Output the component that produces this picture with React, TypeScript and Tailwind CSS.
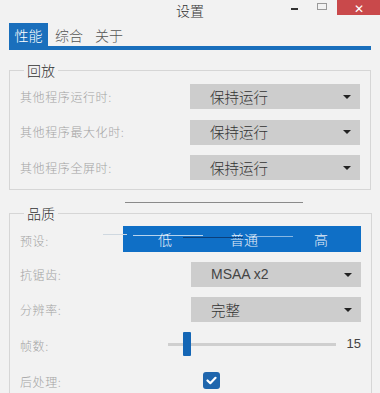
import React from "react";

const font = { fontFamily: '"Noto Sans CJK SC", "Noto Sans", sans-serif' };

function Dropdown({ value, latin }: { value: string; latin?: boolean }) {
  return (
    <div className="flex h-[25px] w-[170px] items-center justify-between bg-[#cdcdcd] pl-[20px] pr-[9px]">
      <span
        className={latin ? "text-[14px] text-[#444]" : "text-[14.5px] font-light text-[#333]"}
        style={latin ? { fontFamily: '"Liberation Sans", Arial, sans-serif' } : undefined}
      >
        {value}
      </span>
      <span className="h-0 w-0 border-x-[4px] border-t-[4px] border-x-transparent border-t-[#222]" />
    </div>
  );
}

function Label({ children }: { children: React.ReactNode }) {
  return <span className="text-[12px] font-light tracking-[0.6px] text-[#a3a3a3]">{children}</span>;
}

export default function App() {
  return (
    <div className="h-[393px] w-[380px] overflow-hidden bg-[#f2f2f2]" style={font}>
      {/* title bar */}
      <div className="grid h-[23px] grid-cols-[1fr_auto_1fr] items-start">
        <div />
        <div className="pt-[1px] text-[14px] font-light leading-[18px] text-[#333]">设置</div>
        <div className="flex items-start justify-end">
          <div className="mr-[19px] mt-[8px] h-[2px] w-[7px] bg-[#333]" />
          <div className="mr-[10px] mt-[3px] h-[7px] w-[10px] border-[1.5px] border-[#999]" />
          <div className="flex h-[15px] w-[43px] items-center justify-center bg-[#c9494b] text-[12px] leading-none text-white">
            ✕
          </div>
        </div>
      </div>

      {/* tabs */}
      <div className="flex items-stretch px-[9px]">
        <div className="flex h-[23px] w-[39px] items-center justify-center bg-[#1a6fbc] pt-[1px] text-[14px] font-light text-white">性能</div>
        <div className="flex h-[23px] items-center pl-[7px] pt-[1px] text-[14px] font-light text-[#555]">综合</div>
        <div className="flex h-[23px] items-center pl-[12px] pt-[1px] text-[14px] font-light text-[#555]">关于</div>
      </div>
      <div className="mx-[9px] h-[4px] bg-[#1a6fbc]" />

      {/* group 回放 */}
      <fieldset className="mx-[9px] mt-[10px] border border-[#d6d6d6] px-[10px] pb-[9px]">
        <legend className="ml-[4px] px-[3px] text-[14px] font-light leading-[20px] text-[#333]">回放</legend>
        <div className="mt-[4px] flex flex-col gap-[10.5px]">
          {["其他程序运行时:", "其他程序最大化时:", "其他程序全屏时:"].map((l) => (
            <div key={l} className="flex items-center justify-between">
              <Label>{l}</Label>
              <Dropdown value="保持运行" />
            </div>
          ))}
        </div>
      </fieldset>

      {/* glitch line */}
      <div className="flex h-[13px] items-end">
        <div className="ml-[125px] h-[1px] w-[178px] bg-[#8a8a8a]" />
      </div>

      {/* group 品质 */}
      <fieldset className="mx-[9px] border border-[#d6d6d6] px-[10px] pb-[9px]">
        <legend className="ml-[4px] px-[3px] text-[14px] font-light leading-[20px] text-[#333]">品质</legend>
        <div className="mt-[3px] flex flex-col">
          <div className="flex h-[26px] items-center">
            <div className="w-[103px]">
              <Label>预设:</Label>
            </div>
            <div className="relative flex h-[26px] w-[238px] items-center bg-[#0f6fc6] text-[14px] font-light text-[#e6eef8]">
              <span className="absolute left-[35px]">低</span>
              <span className="absolute left-[107px]">普通</span>
              <span className="absolute left-[191px]">高</span>
              <div className="absolute left-[10px] top-[9px] h-[1px] w-[70px] bg-white/70" />
              <div className="absolute left-[60px] top-[11px] h-[1px] w-[60px] bg-[#0b3f7a]" />
              <div className="absolute left-[125px] top-[10px] h-[1px] w-[45px] bg-white/50" />
              <div className="absolute left-[-20px] top-[8px] h-[1px] w-[24px] bg-[#cfd8e0]" />
            </div>
          </div>
          <div className="mt-[10px] flex items-center justify-between">
            <Label>抗锯齿:</Label>
            <Dropdown value="MSAA x2" latin />
          </div>
          <div className="mt-[10px] flex items-center justify-between">
            <Label>分辨率:</Label>
            <Dropdown value="完整" />
          </div>
          <div className="mt-[10px] flex h-[24px] items-center">
            <div className="w-[148px]">
              <Label>帧数:</Label>
            </div>
            <div className="relative flex h-[24px] w-[168px] items-center">
              <div className="h-[3px] w-full bg-[#cfcfcf]" />
              <div className="absolute left-[15px] top-0 h-[24px] w-[8px] rounded-[1px] bg-[#1466b5]" />
            </div>
            <span
              className="ml-auto text-[13px] text-[#444]"
              style={{ fontFamily: '"Liberation Sans", Arial, sans-serif' }}
            >
              15
            </span>
          </div>
          <div className="mt-[14px] flex h-[20px] items-center">
            <div className="w-[183px]">
              <Label>后处理:</Label>
            </div>
            <div className="flex h-[17px] w-[17px] items-center justify-center rounded-[3px] bg-[#1f66ad]">
              <svg width="11" height="9" viewBox="0 0 11 9">
                <path d="M1.5 4.5 L4.3 7.2 L9.5 1.8" fill="none" stroke="white" strokeWidth="2.2" strokeLinecap="round" strokeLinejoin="round" />
              </svg>
            </div>
          </div>
        </div>
      </fieldset>
    </div>
  );
}
